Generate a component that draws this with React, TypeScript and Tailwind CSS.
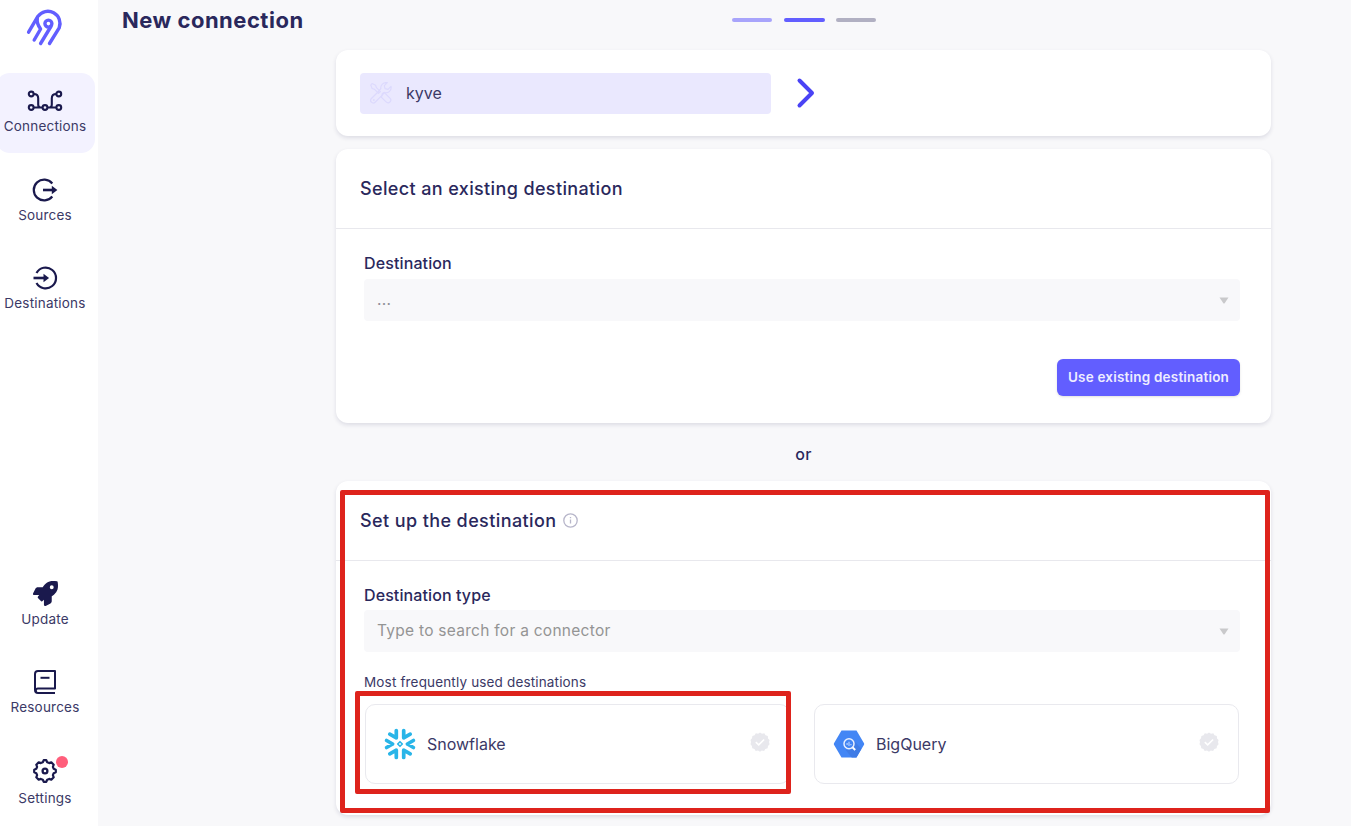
import type { ReactNode } from "react";

function NavItem({ label, icon, active, className = "" }: { label: string; icon: ReactNode; active?: boolean; className?: string }) {
  return (
    <a
      className={`-ml-1 flex h-20 w-[99px] shrink-0 flex-col items-center rounded-[14px] pt-3.5 pr-[1px] ${active ? "bg-[#f3f2ff]" : ""} ${className}`}
    >
      <span className="flex h-7 items-center justify-center">{icon}</span>
      <span className="mt-px text-[13.5px] leading-5 tracking-[0.2px] whitespace-nowrap text-[#3b3966]">{label}</span>
    </a>
  );
}

function Logo() {
  return (
    <svg width="50" height="50" viewBox="0 0 50 50" fill="none" stroke="#625eff" strokeWidth="3.4" strokeLinecap="round" strokeLinejoin="round">
      <path d="M29.5 41.5 39.2 25.8A12.2 12.2 0 0 0 18 14.2L8.6 30.2" />
      <path d="M17.3 16.5C16.6 20.5 18 23.5 20.6 27L14.200 38" />
      <path d="M20.6 41.5 30.9 24.500" />
      <circle cx="28.400" cy="21.600" r="3.500" />
    </svg>
  );
}

function ConnectionsIcon() {
  return (
    <svg width="36" height="22" viewBox="0 0 36 22" fill="none" stroke="#1a194d" strokeWidth="2.1">
      <circle cx="4.200" cy="4" r="2.400" />
      <circle cx="31.800" cy="4" r="2.400" />
      <circle cx="4.200" cy="17.500" r="2.400" />
      <circle cx="18" cy="17.500" r="2.400" />
      <circle cx="31.800" cy="17.500" r="2.400" />
      <path d="M6.600 4c3 0 4.600 1.400 4.600 4.200v6.300c0 1.600.6 3 2.400 3M29.400 4c-3 0-4.600 1.400-4.600 4.200v6.300c0 1.600-.6 3-2.400 3M6.600 17.500h9M20.400 17.500h9" />
    </svg>
  );
}

function SourcesIcon() {
  return (
    <svg width="28" height="24" viewBox="0 0 28 24" fill="none" stroke="#1a194d" strokeWidth="2.200">
      <path d="M21.300 5.500A10.400 10.400 0 1 0 21.300 18.500" />
      <path d="M12 12h10" strokeWidth="2.600" />
      <path d="m20.800 7.800 5.600 4.200-5.600 4.200z" fill="#1a194d" stroke="none" />
    </svg>
  );
}

function DestinationsIcon() {
  return (
    <svg width="26" height="24" viewBox="0 0 26 24" fill="none" stroke="#1a194d" strokeWidth="2.200">
      <path d="M4.500 7A10.400 10.400 0 1 1 4.500 17" />
      <path d="M1.500 12h12" strokeWidth="2.600" />
      <path d="m11.500 7.800 5.600 4.200-5.600 4.200z" fill="#1a194d" stroke="none" />
    </svg>
  );
}

function RocketIcon() {
  return (
    <svg className="-mt-0.5" width="25" height="25" viewBox="0 0 512 512" fill="#1a194d">
      <path d="M505.120 19.090c-1.190-5.530-6.660-11-12.210-12.190C460.720 0 435.510 0 410.400 0 307.170 0 245.270 55.200 199.050 128H94.870c-16.340 0-35.560 11.870-42.870 26.480L2.530 253.290A28.400 28.400 0 0 0 0 264a24 24 0 0 0 24 24h103.840l-22.470 22.470a32 32 0 0 0 0 45.240l50.900 50.910a32 32 0 0 0 45.260 0L224 384.160V488a24 24 0 0 0 24 24 28.600 28.600 0 0 0 10.690-2.530l98.720-49.390c14.630-7.290 26.500-26.500 26.500-42.860V312.790c72.590-46.300 128-108.400 128-211.090.08-25.200.08-50.400-6.790-82.610zM384 168a40 40 0 1 1 0-80 40 40 0 0 1 0 80z" />
    </svg>
  );
}

function ResourcesIcon() {
  return (
    <svg width="22" height="24" viewBox="0 0 22 24" fill="none" stroke="#1a194d" strokeWidth="2" strokeLinejoin="round">
      <path d="M21 23H4a3 3 0 0 1-3-3V4a3 3 0 0 1 3-3h17v17.500H4a2.200 2.200 0 0 0 0 4.400" />
      <path d="M6.500 7.800h9" />
    </svg>
  );
}

function SettingsIcon() {
  return (
    <span className="relative -mt-[5px]">
      <svg width="24" height="24" viewBox="0 0 24 24" fill="none" stroke="#1a194d" strokeWidth="2.200" strokeLinejoin="round">
        <path d="M9.800 3.300 10.700 1.200h2.600l.9 2.100 2 .8 2.100-.8 2.400 2.400-.8 2.100.8 2 2.100.9v2.600l-2.100.9-.8 2 .8 2.100-2.400 2.400-2.100-.8-2 .8-.9 2.100h-2.600l-.9-2.100-2-.8-2.100.8-2.400-2.400.8-2.100-.8-2-2.100-.9v-2.600l2.100-.9.8-2-.8-2.100 2.400-2.400 2.100.8z" />
        <circle cx="12" cy="12" r="2.400" strokeWidth="2.300" />
      </svg>
      <span className="absolute -top-[3px] left-[23px] size-3 rounded-full bg-[#ff5e7b]" />
    </span>
  );
}

function ToolsIcon() {
  return (
    <svg width="22" height="22" viewBox="0 0 22 22" fill="none" stroke="#dcd9fd" strokeWidth="1.200" strokeLinecap="round" strokeLinejoin="round">
      <path d="m2 1.500 3.600 1.700.8 2.400 4 4-1.800 1.800-4-4-2.500-.9L.8 3z" />
      <path d="m12.300 11.600 1.800-1.200 5.800 5.700c2.600 2.700-1.200 6.500-3.800 3.800l-4.600-4.600z" />
      <path d="m8 10-6.600 6.500c-2.400 2.500 1.200 6.100 3.700 3.700l6.900-6.900 2.400-2.600c4 .7 7.400-2 6.600-6.300l-3 3-3-.7-.7-3 3-3c-4-.7-7 2.400-6.500 6z" />
      <circle cx="3.800" cy="18" r=".4" />
    </svg>
  );
}

function InfoIcon() {
  return (
    <svg width="15" height="15" viewBox="0 0 15 15" fill="none" stroke="#b7b6ca" strokeWidth="1.300">
      <circle cx="7.500" cy="7.500" r="6.700" />
      <path d="M7.500 6.600v4M7.500 3.900v1.400" />
    </svg>
  );
}

function SnowflakeLogo() {
  return (
    <svg width="32" height="32" viewBox="0 0 32 32" fill="none" stroke="#29b5e8" strokeWidth="3.700" strokeLinecap="round" strokeLinejoin="round">
      <path d="M12.300 2.500v7.300L5.800 6.200M19.700 2.500v7.300L26.200 6.200" />
      <path d="M12.300 29.500v-7.300L5.800 25.800M19.700 29.500v-7.300L26.200 25.800" />
      <path d="M2.600 12.500 8.600 16l-6 3.500M29.400 12.500 23.400 16l6 3.500" />
      <path d="m16 13.700 2.300 2.300-2.300 2.300-2.300-2.300z" strokeWidth="1.600" />
    </svg>
  );
}

function BigQueryLogo() {
  return (
    <svg width="32" height="28" viewBox="0 0 32 28" fill="none">
      <path d="M8.500.5h15L31 13.300a1.500 1.500 0 0 1 0 1.400l-7.500 12.800h-15L1 14.700a1.500 1.500 0 0 1 0-1.400z" fill="#4386f5" />
      <path d="m20 9.500 8.400 9.200-5 8.800h-4.600l-6.200-7.500 7-1z" fill="#3f7ce6" />
      <circle cx="16" cy="13.800" r="5" stroke="#e9f0ff" strokeWidth="1.500" />
      <path d="m19.700 17.500 2.500 2.500" stroke="#fff" strokeWidth="1.900" />
      <path d="M14.100 13v2M16 11.800v4.200M17.900 14v1.200" stroke="#b5d0ff" strokeWidth="1.200" />
    </svg>
  );
}

function CheckBadge() {
  return (
    <svg width="20" height="20" viewBox="0 0 20 20">
      <path
        d="m10 .5 2 1.300 2.300-.5 1.200 2 2.300.7.200 2.400 1.600 1.700L19 10l.6 2.200-1.600 1.700-.4 2.300-2.300.7-1.200 2-2.300-.4-1.800 1.300-2-1.300-2.300.4-1.200-2-2.200-.7-.4-2.300L.5 12.200 1 10 .5 7.900l1.500-1.700.4-2.300 2.200-.7 1.200-2 2.300.5z"
        fill="#e8e8ed"
      />
      <path d="m5.800 10.200 2.900 2.700 5.400-5.400" fill="none" stroke="#fff" strokeWidth="1.600" />
    </svg>
  );
}

function SelectBox({ children, color }: { children: ReactNode; color: string }) {
  return (
    <div className="flex h-[42px] items-center justify-between rounded bg-[#f8f8fa] pr-[11px] pl-[13px]">
      <span className={`text-[15.5px] leading-6 tracking-[0.27px] ${color}`}>{children}</span>
      <svg width="10" height="7" viewBox="0 0 10 7" fill="#c9c9cb">
        <path d="M.5.500h9L5.800 6a1 1 0 0 1-1.600 0z" />
      </svg>
    </div>
  );
}

function ConnectorCard({ name, logo }: { name: string; logo: ReactNode }) {
  return (
    <div className="flex h-20 items-center rounded-[10px] border border-[#e9e9ee] pr-[19px] pl-[18px]">
      <span className="flex w-8 justify-center">{logo}</span>
      <span className="ml-[11px] text-[16px] text-[#3b3966]">{name}</span>
      <span className="mb-1 ml-auto">
        <CheckBadge />
      </span>
    </div>
  );
}

const cardShadow = "rounded-xl bg-white shadow-[0_2px_4px_rgba(26,25,77,0.12)]";

export default function App() {
  return (
    <div className="flex h-[826px] w-[1351px] overflow-hidden bg-[#f8f8fa] font-['Inter',sans-serif] text-[#2a285c]">
      <nav className="flex w-[98px] shrink-0 flex-col bg-white">
        <div className="mb-[21px] ml-5 h-[50px] pt-0.5">
          <Logo />
        </div>
        <NavItem label="Connections" icon={<ConnectionsIcon />} active className="mt-[2px]" />
        <NavItem label="Sources" icon={<SourcesIcon />} className="mt-[9px]" />
        <NavItem label="Destinations" icon={<DestinationsIcon />} className="mt-2" />
        <NavItem label="Update" icon={<RocketIcon />} className="mt-auto" />
        <NavItem label="Resources" icon={<ResourcesIcon />} className="mt-2" />
        <NavItem label="Settings" icon={<SettingsIcon />} className="mt-[11px] mb-px" />
      </nav>

      <main className="flex flex-1 flex-col">
        <header className="flex h-[50px] shrink-0 items-start pt-1.5 pl-6">
          <h1 className="w-[610px] text-[22px] leading-7 font-bold tracking-[0.5px]">New connection</h1>
          <div className="mt-[11.500px] flex gap-[11.500px]">
            <span className="h-1 w-10 rounded-full bg-[#a8a4fb]" />
            <span className="h-1 w-[41px] rounded-full bg-[#625eff]" />
            <span className="h-1 w-10 rounded-full bg-[#b1b0c2]" />
          </div>
        </header>

        <div className="ml-[238px] flex w-[935px] flex-col">
          <section className={`flex h-[86px] items-center pl-6 ${cardShadow}`}>
            <div className="flex h-[41px] w-[411px] items-center rounded bg-[#eae8fe] pl-2.5">
              <ToolsIcon />
              <span className="mb-px ml-3.5 text-[16px] text-[#3b3966]">kyve</span>
            </div>
            <svg className="ml-[25px]" width="20" height="32" viewBox="0 0 20 32" fill="none" stroke="#4a43f5" strokeWidth="4" strokeLinecap="round" strokeLinejoin="round">
              <path d="m3.500 3.500 12.500 12.500-12.500 12.500" />
            </svg>
          </section>

          <section className={`mt-[13px] flex h-[274px] flex-col ${cardShadow}`}>
            <h2 className="flex h-20 shrink-0 items-center border-b border-[#e8e8ed] pl-6 text-[18px] font-medium tracking-[0.37px]">
              Select an existing destination
            </h2>
            <div className="flex flex-col pt-[22px] pr-[31px] pl-7">
              <label className="mb-1 text-[16px] leading-6 font-medium tracking-[0.12px]">Destination</label>
              <SelectBox color="text-[#8f8f99]">...</SelectBox>
              <button className="mt-[38px] h-[37px] w-[183px] self-end rounded-md bg-[#625eff] text-[13.500px] font-semibold tracking-[0.2px] whitespace-nowrap text-[#eeedff] shadow-sm">
                Use existing destination
              </button>
            </div>
          </section>

          <div className="flex h-[58px] items-center justify-center pt-1 text-[16px] font-medium tracking-[0.2px]">or</div>

          <section className={`relative flex h-[334px] flex-col ${cardShadow}`}>
            <h2 className="flex h-20 shrink-0 items-center gap-[6px] border-b border-[#e8e8ed] pb-px pl-6 text-[18px] font-medium tracking-[0.4px]">
              Set up the destination
              <InfoIcon />
            </h2>
            <div className="flex flex-col pt-[22px] pr-[31px] pl-7">
              <label className="mb-[3px] text-[16px] leading-6 font-medium tracking-[0.1px]">Destination type</label>
              <SelectBox color="text-[#949494]">Type to search for a connector</SelectBox>
              <p className="mt-5 text-[13.500px] leading-5 tracking-[0.16px] text-[#3b3966]">Most frequently used destinations</p>
              <div className="mt-3 mr-[1px] ml-[1px] grid grid-cols-2 gap-6">
                <ConnectorCard name="Snowflake" logo={<SnowflakeLogo />} />
                <ConnectorCard name="BigQuery" logo={<BigQueryLogo />} />
              </div>
            </div>
            <div className="pointer-events-none absolute top-[9px] left-[4px] h-[323px] w-[930px] rounded-[2px] border-5 border-[#de231c]" />
            <div className="pointer-events-none absolute top-[210px] left-[19px] h-[103px] w-[436px] rounded-[2px] border-5 border-[#de231c]" />
          </section>
        </div>
      </main>
    </div>
  );
}
